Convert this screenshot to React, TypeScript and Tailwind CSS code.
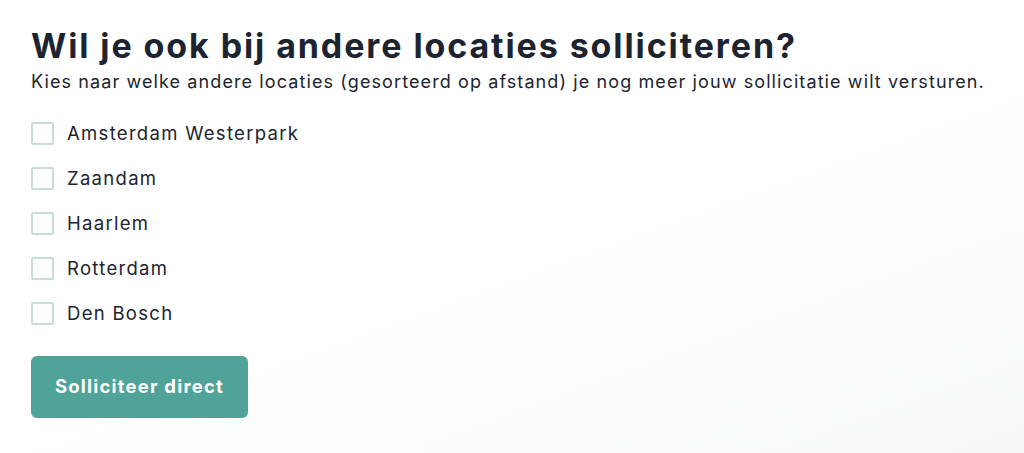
const locations = ["Amsterdam Westerpark", "Zaandam", "Haarlem", "Rotterdam", "Den Bosch"];

export default function App() {
  return (
    <div
      className="h-[453px] w-[1024px] overflow-hidden bg-[linear-gradient(160deg,#ffffff_55%,#f7f8f8)] px-[31px] pt-[25px] text-[#1b2430]"
      style={{ fontFamily: "Inter, 'Noto Sans', sans-serif" }}
    >
      <h1 className="whitespace-nowrap text-[34px] font-bold leading-[42px] tracking-[1.9px]">
        Wil je ook bij andere locaties solliciteren?
      </h1>
      <p className="mt-[3px] whitespace-nowrap text-[18px] leading-[24px] tracking-[1.1px]">
        Kies naar welke andere locaties (gesorteerd op afstand) je nog meer jouw sollicitatie wilt versturen.
      </p>

      <div className="mt-[28px] flex flex-col gap-[22px]">
        {locations.map((loc) => (
          <label key={loc} className="flex h-[23px] items-center gap-[13px]">
            <span className="h-[23px] w-[23px] shrink-0 rounded-[2px] border-2 border-[#c6ddd8] bg-white" />
            <span className="text-[18.5px] leading-[23px] tracking-[1.3px]">{loc}</span>
          </label>
        ))}
      </div>

      <button className="mt-[31px] flex h-[62px] w-[217px] items-center justify-center rounded-[6px] bg-[#4fa398] text-[18.5px] font-bold tracking-[1.2px] text-white">
        Solliciteer direct
      </button>
    </div>
  );
}
